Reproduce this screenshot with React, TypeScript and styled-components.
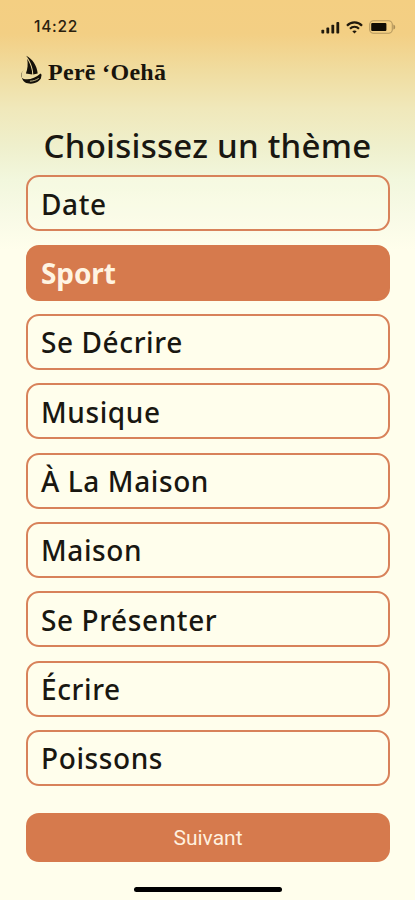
import React, { useState } from "react";
import styled, { createGlobalStyle } from "styled-components";

const GlobalStyle = createGlobalStyle`
  *, *::before, *::after { box-sizing: border-box; }
  html, body { margin: 0; padding: 0; }
`;

const Screen = styled.main`
  width: 415px;
  height: 900px;
  overflow: hidden;
  display: flex;
  flex-direction: column;
  background: linear-gradient(
    to bottom,
    #f4cf82 0px,
    #f3cf84 34px,
    #f0dc9f 70px,
    #f0e8ba 108px,
    #eff0cd 148px,
    #f2f7dd 180px,
    #f8fae6 215px,
    #fffeec 250px,
    #fffeec 100%
  );
  color: #191711;
  font-family: "Noto Sans", sans-serif;
`;

const StatusBar = styled.header`
  height: 54px;
  padding: 0 19px 0 34px;
  display: flex;
  align-items: center;
  justify-content: space-between;
`;

const Clock = styled.span`
  font: 500 15.5px/20px Inter, sans-serif;
  letter-spacing: 0.7px;
  color: #2a200e;
`;

const Indicators = styled.div`
  display: flex;
  align-items: center;
  gap: 6px;
  svg { display: block; }
`;

const Brand = styled.div`
  height: 36px;
  padding-left: 20px;
  display: flex;
  align-items: center;
  gap: 5px;
  svg { display: block; margin-top: -4px; }
`;

const BrandName = styled.span`
  font: 700 24px/36px "Liberation Serif", serif;
  letter-spacing: 0.3px;
  white-space: nowrap;
  color: #18140c;
`;

const Title = styled.h1`
  margin: 33px 0 0;
  height: 52.3px;
  font-size: 33px;
  line-height: 46px;
  font-weight: 500;
  letter-spacing: 0.25px;
  text-align: center;
  white-space: nowrap;
`;

const ThemeList = styled.div`
  display: flex;
  flex-direction: column;
  gap: 13.33px;
  padding: 0 25px 0 26px;
`;

const ThemeButton = styled.button<{ $selected: boolean }>`
  height: 56px;
  padding: 1px 14px 0 13px;
  border: 2px solid ${(p) => (p.$selected ? "#d67a4d" : "#d8825a")};
  border-radius: 13px;
  background: ${(p) => (p.$selected ? "#d67a4d" : "rgba(255, 254, 236, 0.3)")};
  color: ${(p) => (p.$selected ? "#fff4e2" : "#191711")};
  font: ${(p) => (p.$selected ? 700 : 500)} 28px/38px "Noto Sans", sans-serif;
  letter-spacing: ${(p) => (p.$selected ? "-0.1px" : "0.6px")};
  text-align: left;
  white-space: nowrap;
`;

const Footer = styled.footer`
  padding: 27px 25px 0 26px;
  display: flex;
  flex-direction: column;
  align-items: center;
  gap: 25px;
`;

const NextButton = styled.button`
  width: 100%;
  height: 49px;
  padding: 1px 0 0;
  border: 0;
  border-radius: 13px;
  background: #d67a4d;
  color: #fff0df;
  font: 400 21px/28px Roboto, sans-serif;
`;

const HomeIndicator = styled.div`
  width: 148px;
  height: 5px;
  border-radius: 3px;
  background: #000;
`;

const SignalIcon = () => (
  <svg width="19" height="13" viewBox="0 0 19 13" fill="#20190c">
    <rect x="0.4" y="8.8" width="2.8" height="3.8" rx="0.8" />
    <rect x="5.4" y="6.6" width="2.8" height="6" rx="0.8" />
    <rect x="10.4" y="3.8" width="2.8" height="8.8" rx="0.8" />
    <rect x="15.4" y="1" width="2.8" height="11.6" rx="0.8" />
  </svg>
);

const WifiIcon = () => (
  <svg width="17" height="13" viewBox="0 0 17 13" fill="none" stroke="#20190c">
    <path d="M1 4.7C5.1.3 11.9.3 16 4.7" strokeWidth="2.2" />
    <path d="M4 7.7c2.5-2.6 6.5-2.6 9 0" strokeWidth="2.1" />
    <path d="M8.5 12.6 6.3 10.2c1.2-1.1 3.2-1.1 4.4 0z" fill="#20190c" stroke="none" />
  </svg>
);

const BatteryIcon = () => (
  <svg width="27" height="14" viewBox="0 0 27 14">
    <rect x="0.7" y="0.8" width="22.6" height="12.4" rx="3.8" fill="none" stroke="#b4975d" strokeWidth="1.1" />
    <path d="M24.4 4.4c2.4.9 2.4 4.3 0 5.2z" fill="#a98d57" />
    <rect x="2.2" y="2.9" width="15.2" height="8.2" rx="1" fill="#100c05" />
  </svg>
);

const BoatIcon = () => (
  <svg width="23" height="30" viewBox="0 0 22 30" fill="#15110a">
    <path d="M5.6.8C11.9 3.8 16.5 10.5 17.2 18.6l-4.4.8C12.5 12.3 9.4 5.3 5.6.8z" />
    <path d="M6.7 3.8c3 5 4.9 10 5.1 15.8l-6.4-1.1c1.8-4.4 2.2-9.4 1.3-14.7z" />
    <path d="M4 14.3C1.2 16.8-.2 20.1 1.1 22.4c2.6 3.3 12.5 2.6 18.9-3.8l1.1 1.1-.7 3.9c-2.6 4.7-10.7 6.6-16 3.6C.8 24.9-.8 18.4 4 14.3z" />
    <path d="M2.8 16.8c-1.1 2.6.7 4.2 4.5 4.1 3.7.1 6.9-.9 9.9-2.4-3.5 3.7-12.2 5.4-15 2.4-1-1.2-.6-2.8.6-4.1z" fill="#eadca5" />
    <path d="M9.4 26.2c3.3-.1 6.2-1 8.8-2.8" fill="none" stroke="#eadca5" strokeWidth="0.8" />
  </svg>
);

const themes = [
  "Date",
  "Sport",
  "Se Décrire",
  "Musique",
  "À La Maison",
  "Maison",
  "Se Présenter",
  "Écrire",
  "Poissons",
];

export default function App() {
  const [selected, setSelected] = useState("Sport");

  return (
    <>
      <GlobalStyle />
      <Screen>
        <StatusBar>
          <Clock>14:22</Clock>
          <Indicators>
            <SignalIcon />
            <WifiIcon />
            <BatteryIcon />
          </Indicators>
        </StatusBar>
        <Brand>
          <BoatIcon />
          <BrandName>Perē ‘Oehā</BrandName>
        </Brand>
        <Title>Choisissez un thème</Title>
        <ThemeList>
          {themes.map((theme) => (
            <ThemeButton
              key={theme}
              type="button"
              $selected={theme === selected}
              onClick={() => setSelected(theme)}
            >
              {theme}
            </ThemeButton>
          ))}
        </ThemeList>
        <Footer>
          <NextButton type="button">Suivant</NextButton>
          <HomeIndicator />
        </Footer>
      </Screen>
    </>
  );
}
